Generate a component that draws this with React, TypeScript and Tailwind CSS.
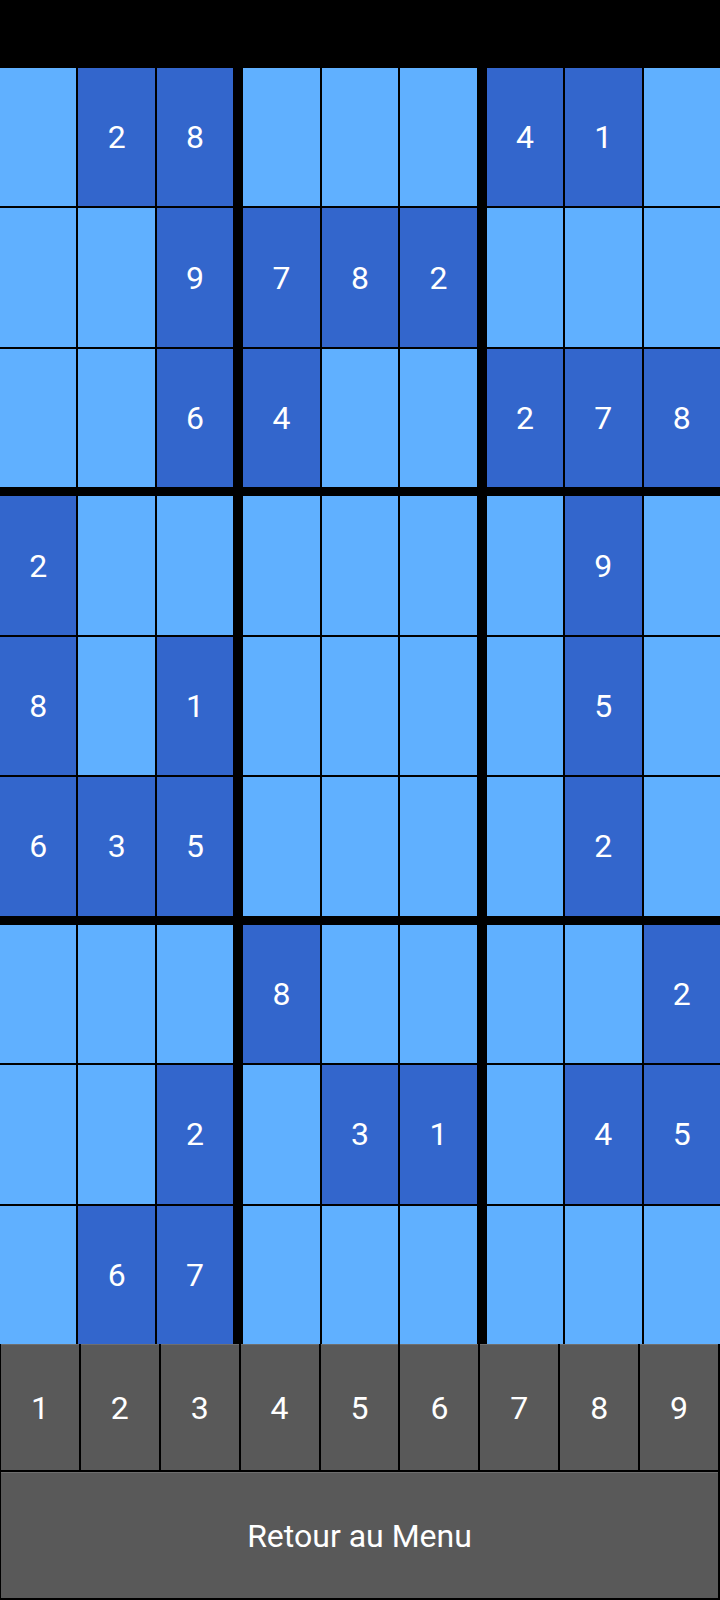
import React from 'react';

const puzzle: (number | null)[][] = [
    [null, 2, 8, null, null, null, 4, 1, null],
    [null, null, 9, 7, 8, 2, null, null, null],
    [null, null, 6, 4, null, null, 2, 7, 8],
    [2, null, null, null, null, null, null, 9, null],
    [8, null, 1, null, null, null, null, 5, null],
    [6, 3, 5, null, null, null, null, 2, null],
    [null, null, null, 8, null, null, null, null, 2],
    [null, null, 2, null, 3, 1, null, 4, 5],
    [null, 6, 7, null, null, null, null, null, null],
];

const font = { fontFamily: 'Roboto, "Noto Sans", sans-serif' };

const Cell: React.FC<{ value: number | null }> = ({ value }) => (
    <div
        className={`flex items-center justify-center text-white text-[32px] leading-none ${
            value ? 'bg-[#3366cc]' : 'bg-[#60b0ff]'
        }`}
    >
        {value ?? ''}
    </div>
);

export default function App() {
    const blocks = [0, 1, 2].flatMap((br) => [0, 1, 2].map((bc) => ({ br, bc })));

    return (
        <div className="w-[720px] h-[1600px] bg-black flex flex-col" style={font}>
            {/* status bar area */}
            <div className="h-[68px] shrink-0 bg-black" />

            {/* Grid */}
            <div className="h-[1276px] shrink-0 grid grid-cols-3 grid-rows-3 gap-x-[10px] gap-y-[9px] bg-black">
                {blocks.map(({ br, bc }) => (
                    <div key={`${br}-${bc}`} className="grid grid-cols-3 grid-rows-3 gap-[2px]">
                        {[0, 1, 2].flatMap((r) =>
                            [0, 1, 2].map((c) => (
                                <Cell key={`${r}-${c}`} value={puzzle[br * 3 + r][bc * 3 + c]} />
                            ))
                        )}
                    </div>
                ))}
            </div>

            {/* Number pad */}
            <div className="flex-1 flex flex-col gap-[2px] pl-[1px] pr-[2px] pb-[2px]">
                <div className="h-[126px] grid grid-cols-9 gap-[2px]">
                    {[1, 2, 3, 4, 5, 6, 7, 8, 9].map((n) => (
                        <button
                            key={n}
                            className="bg-[#595959] border-t border-[#6e6e6e] text-white text-[32px] leading-none flex items-center justify-center"
                        >
                            {n}
                        </button>
                    ))}
                </div>
                <button className="h-[126px] bg-[#595959] border-t border-[#6e6e6e] text-white text-[32px] leading-none flex items-center justify-center">
                    Retour au Menu
                </button>
            </div>
        </div>
    );
}
